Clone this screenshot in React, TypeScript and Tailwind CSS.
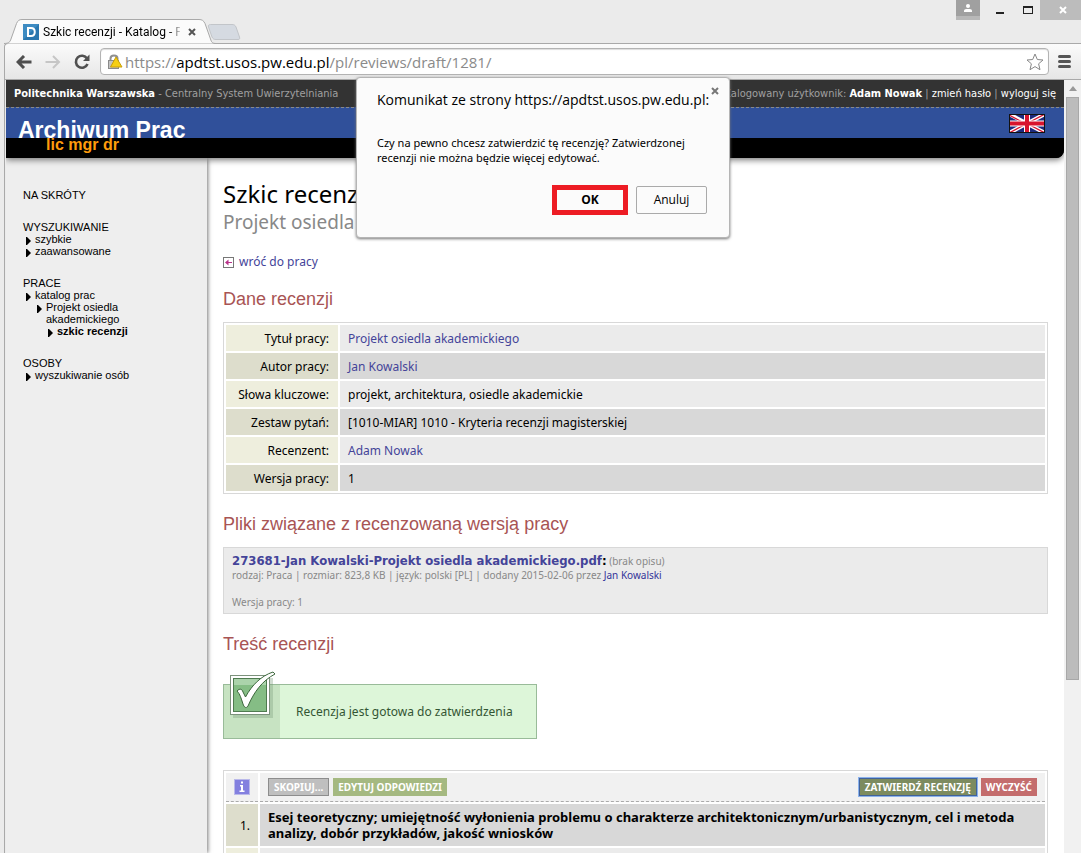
import type { ReactNode } from "react";

type NavItem = { label: string; level: number; active?: boolean };
type NavGroup = { title: string; items: NavItem[] };

const navGroups: NavGroup[] = [
  { title: "NA SKRÓTY", items: [] },
  {
    title: "WYSZUKIWANIE",
    items: [
      { label: "szybkie", level: 0 },
      { label: "zaawansowane", level: 0 },
    ],
  },
  {
    title: "PRACE",
    items: [
      { label: "katalog prac", level: 0 },
      { label: "Projekt osiedla akademickiego", level: 1 },
      { label: "szkic recenzji", level: 2, active: true },
    ],
  },
  { title: "OSOBY", items: [{ label: "wyszukiwanie osób", level: 0 }] },
];

const navIndent = ["pl-[3px]", "pl-[14px]", "pl-[25px]"];

const reviewData = [
  { label: "Tytuł pracy:", value: "Projekt osiedla akademickiego", link: true },
  { label: "Autor pracy:", value: "Jan Kowalski", link: true },
  { label: "Słowa kluczowe:", value: "projekt, architektura, osiedle akademickie" },
  { label: "Zestaw pytań:", value: "[1010-MIAR] 1010 - Kryteria recenzji magisterskiej" },
  { label: "Recenzent:", value: "Adam Nowak", link: true },
  { label: "Wersja pracy:", value: "1" },
];

function TitleBar() {
  return (
    <div className="flex h-[43px] items-end justify-between pl-1">
      <div className="flex items-end">
        <div className="relative z-10 -mb-px flex h-[25px] w-[207px] items-center pl-[19px]">
          <svg className="absolute inset-0" width="212" height="25" viewBox="0 0 212 25" fill="none">
            <path
              d="M0 24.5C5 24.5 6 23 7 20L12.500 4.500C14 1.500 15 0.500 18 0.500H195C198 0.500 199.500 1.500 201 4.500L206.500 20C207.500 23 208 24.500 212 24.500"
              fill="#fbfbfb"
              stroke="#a9a9a9"
            />
          </svg>
          <svg className="relative shrink-0" width="16" height="16" viewBox="0 0 16 16">
            <rect width="16" height="16" fill="#2a76ae" />
            <path d="M0 0H16L0 16Z" fill="#3d8bc2" />
            <path d="M5 4H8C13 4 13 12 8 12H5Z" fill="none" stroke="#fff" strokeWidth="2" />
          </svg>
          <span className="relative ml-1 w-[137px] whitespace-nowrap bg-linear-to-r from-black from-90% to-[#ccc] bg-clip-text font-['Roboto',sans-serif] text-[12px] leading-4 text-transparent">
            Szkic recenzji - Katalog - P
          </span>
          <button aria-label="Zamknij kartę" className="relative ml-2">
            <svg width="8" height="8" viewBox="0 0 8 8" stroke="#555" strokeWidth="2">
              <path d="M1 1L7 7M7 1L1 7" />
            </svg>
          </button>
        </div>
        <button aria-label="Nowa karta" className="-ml-1 mb-[2px]">
          <svg width="34" height="18" viewBox="0 0 34 18">
            <path
              d="M3.500 1.500H25C27 1.500 28 2 29 4L32.500 14C33 16 32.500 16.500 31 16.500H9C7 16.500 6 16 5 14L1.500 4C1 2 2 1.500 3.500 1.500Z"
              fill="#d5dae1"
              stroke="#c2c5c9"
            />
          </svg>
        </button>
      </div>
      <div className="flex h-5 self-start">
        <button aria-label="Profil" className="flex w-6 items-center justify-center border-b-4 border-[#b8b8b8] bg-[#a0a0a0]">
          <svg width="8" height="8" viewBox="0 0 8 8" fill="#fff">
            <circle cx="4" cy="2" r="2" />
            <path d="M0 8V7C0 5 2 5 4 5S8 5 8 7V8Z" />
          </svg>
        </button>
        <button aria-label="Minimalizuj" className="flex w-10 items-center justify-center pt-[6px]">
          <span className="h-[2px] w-2 bg-[#222]" />
        </button>
        <button aria-label="Maksymalizuj" className="flex w-4 items-center justify-center">
          <span className="h-2 w-[10px] border border-t-2 border-[#222]" />
        </button>
        <button aria-label="Zamknij" className="ml-1 flex w-[41px] items-center justify-center bg-[#bcbcbc] pl-1">
          <svg width="8" height="8" viewBox="0 0 8 8" stroke="#fff" strokeWidth="2">
            <path d="M1 1L7 7M7 1L1 7" />
          </svg>
        </button>
      </div>
    </div>
  );
}

function Toolbar() {
  return (
    <div className="ml-1 flex h-[37px] items-center rounded-tl border-l border-t border-b border-[#a9a9a9] bg-linear-to-b from-[#fbfbfb] to-[#e6e6e6] pl-[11px] pr-[10px]">
      <button aria-label="Wstecz">
        <svg width="16" height="14" viewBox="0 0 16 14" fill="none" stroke="#4f4f4f" strokeWidth="3">
          <path d="M15.500 7H3M8 1L2 7L8 13" />
        </svg>
      </button>
      <button aria-label="Dalej" className="ml-[13px]">
        <svg width="16" height="14" viewBox="0 0 16 14" fill="none" stroke="#c6c6c6" strokeWidth="2">
          <path d="M0.500 7H13M8 1L14 7L8 13" />
        </svg>
      </button>
      <button aria-label="Odśwież" className="ml-[13px]">
        <svg width="16" height="16" viewBox="0 0 16 16" fill="none">
          <path d="M13 4.500A6 6 0 1 0 13.500 10" stroke="#505050" strokeWidth="2.600" />
          <path d="M15.500 0.500V7H9Z" fill="#505050" />
        </svg>
      </button>
      <div className="relative ml-[10px] flex h-[27px] flex-1 items-center rounded-sm border border-[#b3b3b3] bg-white pl-[6px] pr-1 shadow-[inset_0_1px_1px_#ddd]">
        <svg width="16" height="16" viewBox="0 0 16 16">
          <path d="M3.500 7V4.500C3.500 0.500 10.500 0.500 10.500 4.500V7" fill="none" stroke="#8f8f8f" strokeWidth="2" />
          <rect x="1.500" y="6.500" width="10" height="8" fill="#c4c4c4" stroke="#8a8a8a" />
          <path d="M9 3L15 13H3.500Z" fill="#f6cf13" stroke="#c99e06" strokeLinejoin="round" />
        </svg>
        <span className="ml-[2px] whitespace-nowrap font-['Open_Sans',sans-serif] text-[15px] leading-5 text-[#8a8a8a]">
          https://<span className="text-black">apdtst.usos.pw.edu.pl</span>/pl/reviews/draft/1281/
        </span>
        <input aria-label="Adres strony" className="absolute inset-0 w-full bg-transparent outline-none" />
        <svg className="relative ml-auto" width="18" height="18" viewBox="0 0 18 18" fill="none" stroke="#888" strokeLinejoin="round">
          <path d="M9 1L11.300 6.500L17 7L12.600 10.800L14 16.700L9 13.600L4 16.700L5.400 10.800L1 7L6.700 6.500Z" />
        </svg>
      </div>
      <button aria-label="Menu" className="ml-[9px] flex flex-col gap-[2px]">
        <span className="h-[3px] w-[13px] rounded-xs bg-[#555]" />
        <span className="h-[3px] w-[13px] rounded-xs bg-[#555]" />
        <span className="h-[3px] w-[13px] rounded-xs bg-[#555]" />
      </button>
    </div>
  );
}

function BritishFlag() {
  return (
    <svg width="36" height="19" viewBox="0 0 36 19">
      <rect width="36" height="19" fill="#1c2a7c" />
      <path d="M0 0L36 19M36 0L0 19" stroke="#fff" strokeWidth="4" />
      <path d="M0 1L18 10.500M18 9.500L36 0M36 19L18 9.500M0 19L18 9.500" stroke="#d8142e" strokeWidth="1.400" />
      <path d="M18 0V19M0 9.500H36" stroke="#fff" strokeWidth="6" />
      <path d="M18 0V19M0 9.500H36" stroke="#d8142e" strokeWidth="4" />
      <rect x="0.500" y="0.500" width="35" height="18" fill="none" stroke="#111" />
    </svg>
  );
}

function SiteHeader() {
  return (
    <header className="relative z-10 rounded-br-lg bg-black shadow-[0_2px_6px_#777]">
      <div className="flex h-[27px] items-center justify-between bg-[#333] px-2 font-['DejaVu_Sans_Condensed',sans-serif] text-[11px] leading-4 text-[#a0a0a0]">
        <p>
          <b className="text-white">Politechnika Warszawska</b> - Centralny System Uwierzytelniania
        </p>
        <p>
          Zalogowany użytkownik: <b className="text-white">Adam Nowak</b> |{" "}
          <a href="#haslo" className="text-white">zmień hasło</a> |{" "}
          <a href="#wyloguj" className="text-white">wyloguj się</a>
        </p>
      </div>
      <div className="flex h-[31px] items-start justify-between border-t border-dashed border-[#8a8a8a] bg-[#30509a] pl-3 pr-[19px] font-['Liberation_Sans',sans-serif]">
        <span className="mt-[10px] text-[23px] font-bold leading-6 text-white">Archiwum Prac</span>
        <button aria-label="English" className="mt-[6px]">
          <BritishFlag />
        </button>
      </div>
      <div className="relative h-5 bg-black rounded-br-lg pl-10 font-['Liberation_Sans',sans-serif] text-[16px] font-bold leading-[14px] text-[#ff9c0c]">
        lic mgr dr
      </div>
    </header>
  );
}

function Sidebar() {
  return (
    <nav className="w-[201px] shrink-0 bg-[#eee] pl-[17px] pt-[31px] font-['Liberation_Sans',sans-serif] text-[11px] leading-3 text-black shadow-[1px_0_4px_#777]">
      {navGroups.map((group) => (
        <div key={group.title} className="mb-5">
          <h2>{group.title}</h2>
          <ul>
            {group.items.map((item) => (
              <li key={item.label} className={`flex w-[124px] ${navIndent[item.level]}`}>
                <svg className="mt-1 mr-1 shrink-0" width="5" height="8" viewBox="0 0 5 8">
                  <path d="M0 0H1L5 4L1 8H0Z" />
                </svg>
                <a href="#nav" className={item.active ? "font-bold whitespace-nowrap" : ""}>
                  {item.label}
                </a>
              </li>
            ))}
          </ul>
        </div>
      ))}
    </nav>
  );
}

function SectionTitle({ children }: { children: ReactNode }) {
  return (
    <h3 className="font-['Liberation_Sans',sans-serif] text-[18px] leading-6 text-[#a85454]">{children}</h3>
  );
}

function ReviewTable() {
  return (
    <table className="mt-[11px] w-full border-separate border-spacing-[2px] border border-[#d8d8d8]">
      <tbody>
        {reviewData.map((row) => (
          <tr key={row.label} className="group h-[26px]">
            <th className="w-[112px] whitespace-nowrap bg-[#eeeedd] pt-[2px] pr-[9px] text-right font-normal group-even:bg-[#ddddcc]">
              {row.label}
            </th>
            <td className="bg-[#ebebeb] pt-[2px] pl-2 group-even:bg-[#d8d8d8]">
              {row.link ? <a href="#link" className="text-[#444499]">{row.value}</a> : row.value}
            </td>
          </tr>
        ))}
      </tbody>
    </table>
  );
}

function FileBox() {
  return (
    <div className="mt-[11px] h-[67px] border border-[#d8d8d8] bg-[#ebebeb] pl-2 pt-[5px] text-[10px] text-[#888]">
      <p className="leading-4">
        <b className="font-['DejaVu_Sans_Condensed',sans-serif] text-[13px] text-black">
          <a href="#plik" className="text-[#444499]">
            273681-Jan Kowalski-Projekt osiedla akademickiego.pdf
          </a>
          :
        </b>{" "}
        (brak opisu)
      </p>
      <p className="leading-3">
        rodzaj: Praca | rozmiar: 823,8 KB | język: polski [PL] | dodany 2015-02-06 przez{" "}
        <a href="#autor" className="text-[#333399]">Jan Kowalski</a>
      </p>
      <p className="mt-[15px] leading-3">Wersja pracy: 1</p>
    </div>
  );
}

function ReadyNotice() {
  return (
    <div className="relative mt-7 flex h-[55px] w-[314px] items-center border border-[#99bb99] bg-[#ddf6d9]">
      <div className="h-full w-14 bg-[#c7e3c2]" />
      <svg className="absolute left-1 -top-[14px]" width="50" height="50" viewBox="0 0 50 50">
        <rect x="5" y="7" width="40" height="40" fill="#7a9a7a" opacity="0.350" />
        <rect x="2.500" y="4.500" width="39" height="39" fill="#fff" stroke="#7c927c" />
        <rect x="5.500" y="7.500" width="33" height="33" fill="#85bd85" stroke="#4f7a50" />
        <rect x="6" y="8" width="32" height="6" fill="#abd3ab" />
        <path
          d="M9 20C12 17 14 18 15 21L17.500 26C24 14 33 5 45 1L47 3C34 10 26 21 20 35C18 38 16 36 15 33C13 27 12 23 9 20Z"
          fill="#fff"
          stroke="#3c673c"
        />
      </svg>
      <p className="pl-4 text-[12px] text-[#335533]">Recenzja jest gotowa do zatwierdzenia</p>
    </div>
  );
}

const actionClass = "h-[18px] text-[10px] font-bold leading-4 text-white";

function AnswersTable() {
  return (
    <table className="mt-[31px] w-full border-separate border-spacing-[2px] border border-[#d8d8d8]">
      <tbody>
        <tr className="h-[29px]">
          <td className="w-8 border-b border-dashed border-[#aaa] bg-[#f1f1f1]">
            <svg className="mx-auto" width="16" height="16" viewBox="0 0 16 16">
              <rect x="0.500" y="0.500" width="15" height="15" fill="#8380df" stroke="#bab9ea" />
              <path d="M7 2.500H9V4.500H7ZM6 6H9V11.500H10.500V13H5.500V11.500H7V7.500H6Z" fill="#fff" />
            </svg>
          </td>
          <td className="border-b border-dashed border-[#aaa] bg-[#f1f1f1] px-2">
            <div className="flex items-center gap-1">
              <button className={`${actionClass} border border-[#8d8d8d] bg-[#bfbfbf] px-[5px]`}>SKOPIUJ...</button>
              <button className={`${actionClass} bg-[#a5b981] px-[5px]`}>EDYTUJ ODPOWIEDZI</button>
              <button className={`${actionClass} ml-auto border border-[#41629a] bg-[#7c8b5f] px-[5px] outline outline-[#8bb2ec]`}>
                ZATWIERDŹ RECENZJĘ
              </button>
              <button className={`${actionClass} bg-[#c46d6d] px-[5px]`}>WYCZYŚĆ</button>
            </div>
          </td>
        </tr>
        <tr className="h-[42px]">
          <th className="bg-[#ddddcc] pt-[2px] pr-2 text-right font-normal">1.</th>
          <td className="bg-[#d8d8d8] px-2 text-[13px] font-bold leading-4">
            Esej teoretyczny; umiejętność wyłonienia problemu o charakterze architektonicznym/urbanistycznym, cel i
            metoda analizy, dobór przykładów, jakość wniosków
          </td>
        </tr>
        <tr className="h-[42px]">
          <td className="bg-[#eeeedd]" />
          <td className="bg-[#ebebeb]" />
        </tr>
      </tbody>
    </table>
  );
}

function ConfirmDialog() {
  return (
    <div
      role="dialog"
      aria-label="Komunikat"
      className="absolute left-[356px] top-[77px] z-20 h-[161px] w-[374px] rounded-sm border border-[#b5b5b5] bg-[#fbfbfb] pl-5 pr-[22px] pt-3 font-['Open_Sans',sans-serif] text-black shadow-[0_1px_3px_#777]"
    >
      <button aria-label="Zamknij komunikat" className="absolute right-[10px] top-[9px]">
        <svg width="8" height="8" viewBox="0 0 8 8" stroke="#777" strokeWidth="2">
          <path d="M1 1L7 7M7 1L1 7" />
        </svg>
      </button>
      <h2 className="whitespace-nowrap text-[14px] leading-5">Komunikat ze strony https://apdtst.usos.pw.edu.pl:</h2>
      <p className="mt-[25px] whitespace-nowrap font-['Noto_Sans',sans-serif] text-[11px] leading-[15px]">
        Czy na pewno chcesz zatwierdzić tę recenzję? Zatwierdzonej
        <br />
        recenzji nie można będzie więcej edytować.
      </p>
      <div className="mt-5 flex items-center justify-end gap-2 text-[12px]">
        <button className="h-[30px] w-[76px] border-5 border-[#ed1c24] font-bold">OK</button>
        <button className="h-7 w-[71px] rounded-xs border border-[#aaa]">Anuluj</button>
      </div>
    </div>
  );
}

export default function App() {
  return (
    <div className="relative flex h-screen flex-col overflow-hidden bg-[#ebebeb]">
      <TitleBar />
      <Toolbar />
      <div className="ml-1 flex min-h-0 flex-1 border-l border-[#a9a9a9] pl-px">
        <div className="flex min-w-0 flex-1 flex-col overflow-hidden bg-white">
          <SiteHeader />
          <div className="flex min-h-0 flex-1">
            <Sidebar />
            <main className="min-w-0 flex-1 pl-4 pr-4 pt-5 font-['Noto_Sans',sans-serif] text-[12px] leading-4 text-black">
              <h1 className="text-[24px] leading-8">Szkic recenzji</h1>
              <p className="text-[19px] leading-6 text-[#888]">Projekt osiedla akademickiego</p>
              <a href="#praca" className="mt-5 mb-[17px] flex items-center gap-[5px] text-[#444499]">
                <svg width="11" height="11" viewBox="0 0 11 11">
                  <rect x="0.500" y="0.500" width="10" height="10" fill="#fff" stroke="#777" />
                  <path d="M2 5.500L5.500 2.500V5H9V6H5.500V8.500Z" fill="#b8328a" />
                </svg>
                wróć do pracy
              </a>
              <SectionTitle>Dane recenzji</SectionTitle>
              <ReviewTable />
              <div className="h-[18px]" />
              <SectionTitle>Pliki związane z recenzowaną wersją pracy</SectionTitle>
              <FileBox />
              <div className="h-[18px]" />
              <SectionTitle>Treść recenzji</SectionTitle>
              <ReadyNotice />
              <AnswersTable />
            </main>
          </div>
        </div>
        <div className="flex w-[17px] shrink-0 flex-col items-center bg-[#f1f1f1]">
          <svg className="my-[6px]" width="8" height="5" viewBox="0 0 8 5">
            <path d="M4 0L8 5H0Z" fill="#999" />
          </svg>
          <div className="h-[583px] w-[13px] border border-[#a8a8a8] bg-[#bcbcbc]" />
        </div>
      </div>
      <ConfirmDialog />
    </div>
  );
}
